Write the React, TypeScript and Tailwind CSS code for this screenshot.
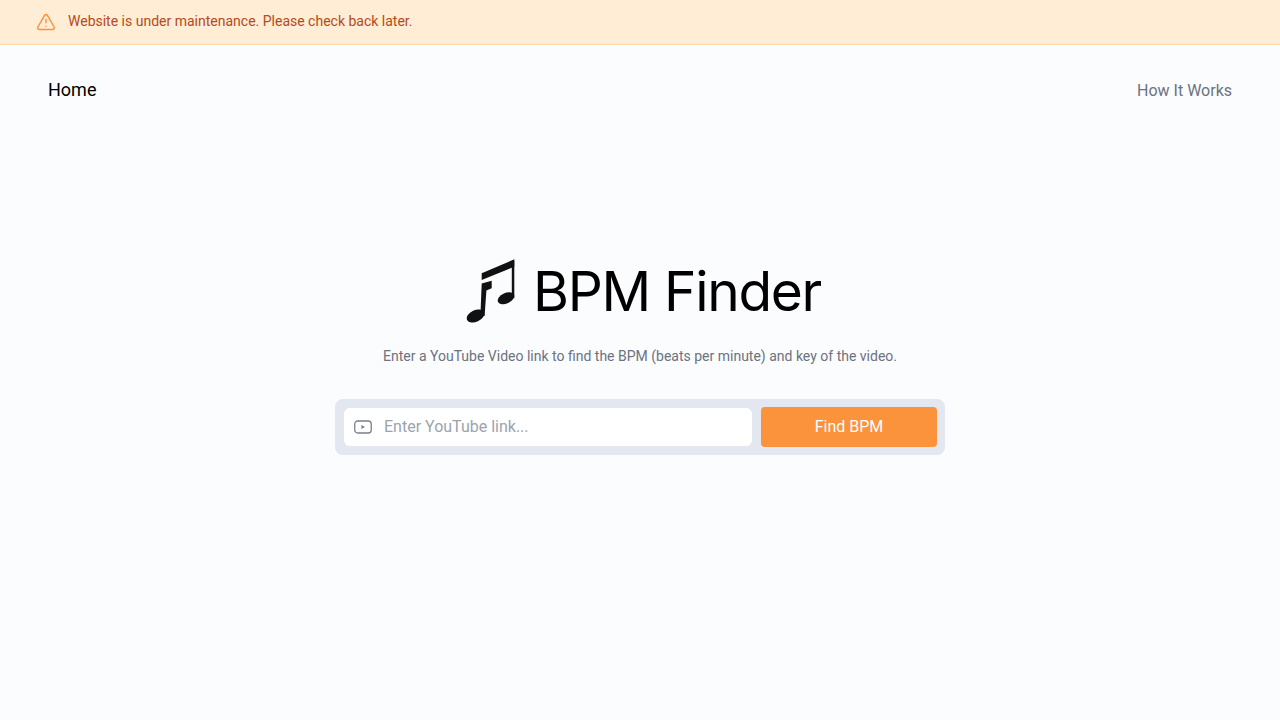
import React from 'react';
import { TriangleAlert } from 'lucide-react';

const NoteIcon = () => (
  <svg viewBox="0 0 52 66" className="w-[52px] h-[66px] shrink-0" fill="#111111">
    <path d="M15.7 15.3 L48.3 1.3 L48.3 8.7 L15.7 22 Z" />
    <rect x="45.8" y="3" width="2.5" height="37" />
    <ellipse cx="40" cy="40.3" rx="8.8" ry="5.2" transform="rotate(-25 40 40.3)" />
    <path d="M15.7 25.5 L25.7 22.7 L25.7 30.3 L20.4 32.4 L18.6 58 L14.4 58 Z" />
    <ellipse cx="9.5" cy="58" rx="9.3" ry="5.8" transform="rotate(-25 9.5 58)" />
  </svg>
);

const YoutubeIcon = () => (
  <svg viewBox="0 0 18 14" className="w-[18px] h-[14px] shrink-0" fill="none">
    <rect x="0.75" y="1" width="16.5" height="12" rx="3" stroke="#7b8088" strokeWidth="1.3" />
    <path d="M7.4 4.9 L11 7 L7.4 9.1 Z" fill="#7b8088" />
  </svg>
);

export default function App() {
  return (
    <div className="min-h-screen bg-[#fbfcfe] font-['Roboto',sans-serif]">
      <div className="h-[45px] bg-[#ffedd5] border-b border-[#fed7aa] flex items-center pl-[36px] gap-[12px]">
        <TriangleAlert className="w-5 h-5 text-[#fb923c]" strokeWidth={1.75} />
        <span className="text-sm text-[#b54a1a] mb-[2px]">Website is under maintenance. Please check back later.</span>
      </div>

      <nav className="flex items-center justify-between px-12 h-[90px]">
        <a className="text-lg text-black">Home</a>
        <a className="text-base text-[#6b7280] mt-[2px]">How It Works</a>
      </nav>

      <main className="flex flex-col items-center pt-[123px]">
        <div className="flex items-center gap-[15px] h-[66px] pl-[7px]">
          <NoteIcon />
          <h1 className="font-['Inter',sans-serif] font-normal text-[55px] leading-none tracking-[-0.024em] text-black">BPM Finder</h1>
        </div>

        <p className="mt-[22px] text-sm text-[#6b7280]">
          Enter a YouTube Video link to find the BPM (beats per minute) and key of the video.
        </p>

        <form className="mt-[33px] w-[610px] h-[56px] bg-[#e3e8f0] rounded-lg pl-[9px] pr-2 flex items-center gap-[9px]">
          <div className="w-[408px] h-[38px] bg-white rounded-md flex items-center pl-[10px] gap-[12px]">
            <YoutubeIcon />
            <span className="text-base text-[#9ca3af]">Enter YouTube link...</span>
          </div>
          <button type="button" className="w-[176px] h-10 bg-[#fb923c] rounded text-white text-base font-normal">
            Find BPM
          </button>
        </form>
      </main>
    </div>
  );
}
